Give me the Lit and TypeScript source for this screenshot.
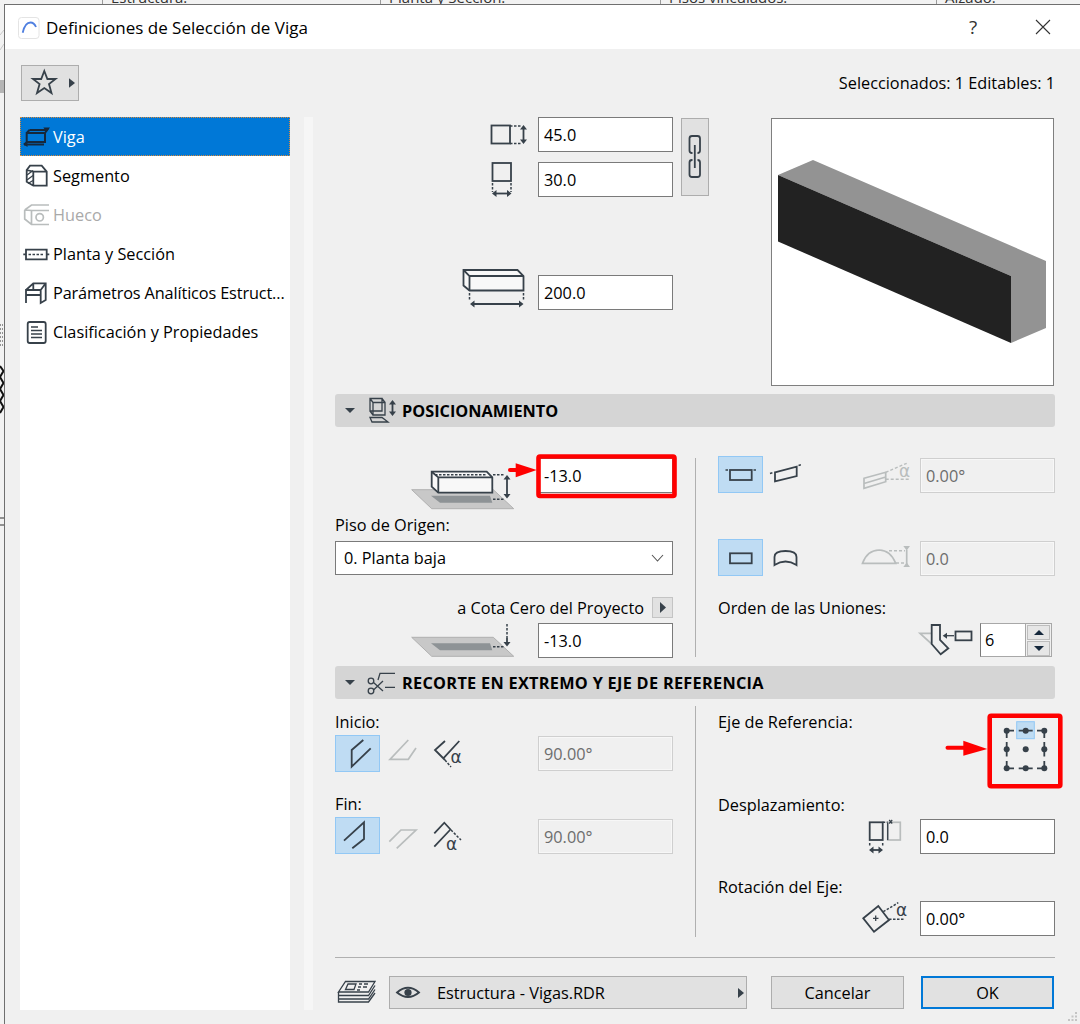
import { LitElement, html, css, svg } from 'lit';
import { customElement } from 'lit/decorators.js';

// svg whose viewBox uses the coordinates of the reference, so shapes can be read off it
const box = (x: number, y: number, w: number, h: number, body: unknown) =>
  html`<svg class="ico" width=${w} height=${h} viewBox="${x} ${y} ${w} ${h}">${body}</svg>`;

const vArrow = (x: number, y1: number, y2: number, cls = 'f') =>
  svg`<path class="s" d="M${x} ${y1 + 3}V${y2 - 3}"/><path class=${cls} d="M${x - 3.5} ${y1 + 4.5}L${x} ${y1}L${x + 3.5} ${y1 + 4.5}zM${x - 3.5} ${y2 - 4.5}L${x} ${y2}L${x + 3.5} ${y2 - 4.5}z"/>`;
const hArrow = (y: number, x1: number, x2: number) =>
  svg`<path class="s" d="M${x1 + 3} ${y}H${x2 - 3}"/><path class="f" d="M${x1 + 4.5} ${y - 3.5}L${x1} ${y}L${x1 + 4.5} ${y + 3.5}zM${x2 - 4.5} ${y - 3.5}L${x2} ${y}L${x2 - 4.5} ${y + 3.5}z"/>`;
const alpha = (x: number, y: number, cls = 'a') => svg`<text class=${cls} x=${x} y=${y}>α</text>`;

const plate = (y: number) => svg`
  <path class="pl" d="M411.7 ${y}H493.3L513.7 ${y + 19}H431.7z"/>
  <path class="sh" d="M431 ${y + 6}H490L492.3 ${y + 13}H440z"/>
  <path class="dash" d="M493 ${y + 9.5}H505"/>`;

const navIcons = {
  viga: svg`<path class="nv" d="M26.7 133H45V142H26.7zM29.500 130H47L45 133M29.500 130L26.7 133"/><path class="nv" d="M24 144.500H44"/><path class="nvf" d="M43.3 127.500H50L46.7 132zM23 144L27.500 140.500V147z"/>`,
  seg: svg`<path class="s" d="M26.7 170L30 165.700H41.700L46.700 171.700V185.700H33.300L26.700 181.700zM26.700 170L33.300 171.700V185.700M33.300 171.700H46.700"/><path class="s t" d="M27 175L33 170.500M27 180L33 175.500M28 183.500L33 180.500"/>`,
  hueco: svg`<path class="g" d="M24.700 210L31.500 205H49M24.700 210V219L31.500 224.500H49M24.700 210L31.500 210.500V224.500M31.500 210.500H49"/><circle class="g" cx="39.700" cy="217.300" r="3.700"/>`,
  planta: svg`<path class="s" d="M26 249.700H46.700V259.300H26zM23.300 254.400H26M46.700 254.400H49.300"/><path class="dash" d="M28.500 254.400H44.500"/>`,
  param: svg`<path class="s" d="M26 290L33.300 283.300H45.700V300L40.700 303V290H26V303M40.700 290L45.700 283.300M26 295H40.700M33.300 283.300V290"/>`,
  clasif: svg`<rect class="s" x="27.700" y="322" width="18" height="21" rx="2"/><path class="s t" d="M31 327H38M31 330.500H42M31 334H42M31 337.500H42"/>`,
};

@customElement('app-root')
export class AppRoot extends LitElement {
  static styles = css`
    :host {
      display: block;
      position: relative;
      width: 1080px;
      height: 1024px;
      overflow: hidden;
      background: #f2f2f2;
      font-family: "Open Sans", "Noto Sans", sans-serif;
      font-size: 16.3px;
      color: #000;
    }
    * { box-sizing: border-box; }
    svg.ico { display: block; flex: none; overflow: visible; }
    .s { fill: none; stroke: #37414a; stroke-width: 1.8; }
    .s.t { stroke-width: 1.3; }
    .f { fill: #37414a; }
    .g { fill: none; stroke: #b9bdbd; stroke-width: 1.7; }
    .gf { fill: #b9bdbd; }
    .dash { fill: none; stroke: #37414a; stroke-width: 1.5; stroke-dasharray: 2.5 1.5; }
    .gdash { fill: none; stroke: #b9bdbd; stroke-width: 1.4; stroke-dasharray: 3 2; }
    .face { fill: #f8f8f8; stroke: #37414a; stroke-width: 1.8; }
    .pl { fill: #c8c8c8; stroke: #b0b0b0; stroke-width: 1; }
    .sh { fill: #8e9396; }
    .nv { fill: none; stroke: #16283c; stroke-width: 2; }
    .nvf { fill: #16283c; }
    text.a { font-size: 17px; fill: #37414a; font-family: "DejaVu Sans", sans-serif; }
    text.ag { font-size: 17px; fill: #b9bdbd; font-family: "DejaVu Sans", sans-serif; }

    .strip {
      display: grid;
      grid-template-columns: 102px 278px 280px 276px 1fr;
      height: 4px;
      overflow: hidden;
      font-size: 15px;
      line-height: 14px;
      color: #333;
    }
    .strip span { padding-left: 8px; margin-top: -10px; border-left: 1px solid #9a9a9a; height: 20px; }
    .strip span:first-child { border: 0; }
    .desk { display: flex; }
    .dialog {
      width: 1076px;
      height: 1020px;
      border: solid #6f6f6f;
      border-width: 1px 0 0 1px;
      background: #f0f0f0;
    }

    .title {
      display: flex;
      align-items: center;
      height: 44px;
      background: #fff;
      padding-left: 12px;
      font-size: 17px;
    }
    .title .name { margin-left: 6px; }
    .title .help { margin-left: auto; width: 20px; text-align: center; color: #333; font-size: 19px; margin-right: 52px; }
    .title .close { margin-right: 29px; }

    .body { padding: 16px 25px 0 15px; }
    .tools {
      display: flex;
      justify-content: space-between;
      align-items: center;
      height: 36px;
      margin-bottom: 16px;
      padding-left: 1px;
    }
    .fav {
      display: flex;
      align-items: center;
      width: 58px;
      height: 36px;
      background: #e1e1e1;
      border: 1px solid #adadad;
    }
    .columns { display: flex; }

    .nav { width: 270px; height: 893px; background: #fff; flex: none; }
    .nav-item {
      display: flex;
      align-items: center;
      height: 39px;
      padding-left: 3px;
      white-space: nowrap;
    }
    .nav-item span { margin-left: 3px; }
    .nav-item.on { background: #0078d7; color: #fff; outline: 1px dotted #d98a3a; outline-offset: -1px; }
    .nav-item.off { color: #a9a9a9; }
    .nav-item .tight { letter-spacing: -0.13px; }
    .track { width: 9px; height: 893px; margin: 0 22px 0 14px; background: #f6f6f6; flex: none; }
    .main { width: 720px; flex: none; }

    .top { display: flex; height: 277px; }
    .sizes { display: flex; flex-direction: column; gap: 10px; width: 338px; }
    .sizes .far { margin-top: 68px; }
    .field { display: flex; justify-content: flex-end; height: 35px; }
    .input {
      display: flex;
      align-items: center;
      width: 135px;
      height: 35px;
      padding-left: 5px;
      background: #fff;
      border: 1px solid #7a7a7a;
      flex: none;
    }
    .input.dis { background: #f0f0f0; border: 1px solid #cfcfcf; color: #6d6d6d; box-shadow: inset 0 0 0 1px #f7f7f7; }
    .link {
      display: flex;
      width: 28px;
      height: 78px;
      margin: 1px 62px 0 8px;
      background: #e1e1e1;
      border: 1px solid #adadad;
    }
    .preview {
      width: 283px;
      height: 268px;
      margin-top: 1px;
      background: #fff;
      border: 1px solid #7f7f7f;
    }

    .head {
      display: flex;
      align-items: center;
      height: 33px;
      background: #d5d5d5;
      border-radius: 3px;
      font-weight: 700;
      white-space: nowrap;
    }
    .head span { margin-left: 2px; }
    .head .wide { letter-spacing: 0.29px; }

    .pos { display: flex; height: 239px; }
    .trim { display: flex; height: 258px; }
    .left { width: 338px; flex: none; }
    .right { width: 337px; flex: none; }
    .rule { width: 1px; margin: 0 22px; background: #b0b0b0; flex: none; }
    .pos .rule { height: 199px; margin-top: 31px; }
    .trim .rule { height: 231px; margin-top: 7px; }
    .pos .left { padding-top: 31px; }
    .pos .right { padding-top: 29px; }
    .trim .left, .trim .right { padding-top: 12px; }

    .label { height: 22px; line-height: 22px; white-space: nowrap; }
    .pos .left .label { margin-top: 21px; }
    .select {
      display: flex;
      align-items: center;
      justify-content: space-between;
      height: 34px;
      margin-top: 5px;
      padding: 0 8px;
      background: #fff;
      border: 1px solid #7a7a7a;
    }
    .cota {
      display: flex;
      justify-content: flex-end;
      align-items: center;
      gap: 8px;
      height: 21px;
      margin-top: 22px;
      white-space: nowrap;
    }
    .mini {
      display: flex;
      width: 21px;
      height: 21px;
      background: #e1e1e1;
      border: 1px solid #c4c4c4;
      flex: none;
    }
    .cota + .field { margin-top: 5px; }

    .toggles { display: flex; height: 37px; }
    .toggles .input { margin-top: 2px; }
    .toggles.second { margin-top: 46px; }
    .toggle {
      width: 45px;
      height: 37px;
      background: #bfdcf3;
      border: 1px solid #92c8f5;
      flex: none;
    }
    .right > .label.order { margin-top: 21px; }
    .spin-row { display: flex; justify-content: flex-end; margin: 4px 3px 0 0; }
    .spin { display: flex; width: 72px; height: 34px; border: 1px solid #a8a8a8; border-left-color: #7a7a7a; }
    .spin .val { display: flex; align-items: center; width: 45px; padding-left: 4px; background: #fff; border-right: 1px solid #a8a8a8; }
    .spin .btns { display: flex; flex-direction: column; justify-content: center; gap: 1px; flex: 1; padding: 0 1px; }
    .spin .btns div { display: flex; height: 15px; background: #e6e6e6; border: 1px solid #bdbdbd; }
    .spin svg { margin: auto; }

    .trim .left .label, .trim .right .label { margin-bottom: 2px; }
    .trim .left .toggles .input { margin-top: 1px; }
    .trim .left .fin { margin-top: 21px; }
    .trim .left .toggles.end .input { margin-top: 2px; }
    .eje { display: flex; justify-content: space-between; height: 83px; }
    .trim .right .field { margin-top: 3px; }
    .trim .right .rot { margin-top: 22px; }

    .sep { height: 1px; background: #b0b0b0; }
    .foot { display: flex; align-items: stretch; height: 33px; margin-top: 18px; }
    .combo {
      display: flex;
      align-items: center;
      width: 358px;
      background: #e1e1e1;
      border: 1px solid #adadad;
      white-space: nowrap;
    }
    .combo span { margin-left: 15px; flex: 1; }
    .btn {
      display: flex;
      align-items: center;
      justify-content: center;
      width: 133px;
      margin-left: 24px;
      background: #e1e1e1;
      border: 1px solid #adadad;
    }
    .btn.ok { margin-left: 17px; border: 2px solid #0078d7; }

    .marks { position: absolute; left: 0; top: 0; pointer-events: none; }
    .grip { position: absolute; right: 2px; bottom: 2px; }
  `;

  render() {
    return html`
      <div class="strip">
        <span></span><span>Estructura:</span><span>Planta y Sección:</span><span>Pisos vinculados:</span><span>Alzado:</span>
      </div>
      <div class="desk">
        ${box(0, 4, 4, 1020, svg`
          <path d="M0 35L4 30M0 50L4 44" stroke="#c9c9c9" fill="none"/>
          <rect x="0" y="80" width="4" height="13" fill="#b5b5b5"/>
          <path d="M0 325H4M0 329H4M0 333H4M0 337H4M0 341H4M0 345H4" stroke="#333" stroke-dasharray="1 1"/>
          <path d="M0 366L3.500 371L0 377L3.500 383L0 389L3.500 395L0 401L3.500 407L0 413" stroke="#111" stroke-width="2" fill="none"/>
          <path d="M0 518H4M0 525H4" stroke="#333"/>
        `)}
        <div class="dialog">
          <div class="title">
            ${box(16, 14, 23, 23, svg`
              <rect x="17.500" y="15.500" width="20.500" height="21" rx="3" fill="#fff" stroke="#e4e4e4"/>
              <path d="M21.700 30.700Q24 20.500 29.500 20.500Q33 20.500 35 25" fill="none" stroke="#4f7fe0" stroke-width="1.800"/>
            `)}
            <div class="name">Definiciones de Selección de Viga</div>
            <div class="help">?</div>
            <div class="close">
              ${box(1035, 20, 16, 16, svg`<path d="M1036 21L1050 35M1050 21L1036 35" fill="none" stroke="#333" stroke-width="1.100"/>`)}
            </div>
          </div>

          <div class="body">
            <div class="tools">
              <div class="fav">
                ${box(22, 66, 56, 34, svg`
                  <path class="s" d="M44.300 71L47.400 79H55.500L49 84L51.500 93L44.300 88L37 93L39.600 84L33 79H41.200z"/>
                  <path class="f" d="M69 78.300L75 83L69 87.700z"/>
                `)}
              </div>
              <div>Seleccionados: 1 Editables: 1</div>
            </div>

            <div class="columns">
              <div class="nav">
                <div class="nav-item on">${box(23, 117, 27, 39, navIcons.viga)}<span>Viga</span></div>
                <div class="nav-item">${box(23, 156, 27, 39, navIcons.seg)}<span>Segmento</span></div>
                <div class="nav-item off">${box(23, 195, 27, 39, navIcons.hueco)}<span>Hueco</span></div>
                <div class="nav-item">${box(23, 234, 27, 39, navIcons.planta)}<span>Planta y Sección</span></div>
                <div class="nav-item">${box(23, 273, 27, 39, navIcons.param)}<span class="tight">Parámetros Analíticos Estruct...</span></div>
                <div class="nav-item">${box(23, 312, 27, 39, navIcons.clasif)}<span>Clasificación y Propiedades</span></div>
              </div>
              <div class="track"></div>

              <div class="main">
                <div class="top">
                  <div class="sizes">
                    <div class="field">
                      ${box(488, 117, 50, 35, svg`
                        <rect class="s" x="491.500" y="125.500" width="18.500" height="18"/>
                        <path class="dash" d="M510 126H522M510 143.500H522"/>
                        ${vArrow(523.500, 125, 144)}
                      `)}
                      <div class="input">45.0</div>
                    </div>
                    <div class="field">
                      ${box(488, 162, 50, 35, svg`
                        <rect class="s" x="492.500" y="163" width="18.500" height="18"/>
                        <path class="dash" d="M492.500 183V192M511 183V192"/>
                        ${hArrow(193.500, 492, 511.500)}
                      `)}
                      <div class="input">30.0</div>
                    </div>
                    <div class="field far">
                      ${box(460, 275, 78, 35, svg`
                        <path class="face" d="M463.500 270H517.500L523.500 276V290.500H469.500L463.500 285.500z"/>
                        <path class="s" d="M463.500 270L469.500 276V290.500M469.500 276H523.500"/>
                        <path class="dash" d="M469.500 293V301M523.500 293V301"/>
                        ${hArrow(304, 470, 523.500)}
                      `)}
                      <div class="input">200.0</div>
                    </div>
                  </div>
                  <div class="link">
                    ${box(682, 119, 26, 76, svg`
                      <rect class="s" x="689.500" y="136" width="10.500" height="17" rx="2.500"/>
                      <rect class="s" x="689.500" y="160" width="10.500" height="17" rx="2.500"/>
                      <path d="M692.500 153H697.500M692.500 160H697.500" stroke="#e1e1e1" stroke-width="3"/>
                      <path class="s" d="M694.800 145V168"/>
                    `)}
                  </div>
                  <div class="preview">
                    ${box(772, 119, 281, 266, svg`
                      <path fill="#939393" d="M778 175L813 160L1046 261V328L1011 343L1011 276z"/>
                      <path fill="#222" d="M778 175L1011 276V343L778 241.500z"/>
                    `)}
                  </div>
                </div>

                <div class="head">
                  ${box(335, 394, 65, 33, svg`
                    <path class="f" d="M345 408H355L350 413z"/>
                    <path class="s t" d="M370 398.500H382V411H370zM373 402.500H385V415H373zM370 398.500L373 402.500M382 398.500L385 402.500M370 411L373 415"/>
                    <path class="s t" d="M370 417.500H382L388 422H372z"/>
                    ${vArrow(392.500, 400, 416)}
                  `)}
                  <span>POSICIONAMIENTO</span>
                </div>

                <div class="pos">
                  <div class="left">
                    <div class="field">
                      ${box(408, 458, 130, 35, svg`
                        ${plate(489.700)}
                        <path class="face" d="M431.700 471.700H486.700L492.300 477.300V492.700H438.300L431.700 486.700z"/>
                        <path class="s" d="M431.700 471.700L438.300 477.300V492.700M438.300 477.300H492.300"/>
                        <path class="dash" d="M435 474.700H487M493 474.700H505"/>
                        ${vArrow(507, 475, 498.500)}
                      `)}
                      <div class="input">-13.0</div>
                    </div>
                    <div class="label">Piso de Origen:</div>
                    <div class="select">
                      <span>0. Planta baja</span>
                      ${box(653, 553, 13, 9, svg`<path d="M654 554L659.500 560L665 554" fill="none" stroke="#555" stroke-width="1.100"/>`)}
                    </div>
                    <div class="cota">
                      <span>a Cota Cero del Proyecto</span>
                      <div class="mini">${box(652, 598, 19, 19, svg`<path class="f" d="M659 602L665 607.500L659 613z"/>`)}</div>
                    </div>
                    <div class="field">
                      ${box(408, 623, 130, 35, svg`
                        ${plate(637.300)}
                        <path class="dash" d="M507 624V638"/>
                        <path class="s" d="M507 638V645"/>
                        <path class="f" d="M503.500 642H510.500L507 646.500z"/>
                      `)}
                      <div class="input">-13.0</div>
                    </div>
                  </div>
                  <div class="rule"></div>
                  <div class="right">
                    <div class="toggles">
                      <div class="toggle">
                        ${box(719, 457, 43, 35, svg`
                          <rect class="s" x="730" y="470" width="21.700" height="10"/>
                          <path class="dash" d="M725.500 470H728.500M753.500 470H756.500"/>
                        `)}
                      </div>
                      ${box(763, 456, 157, 37, svg`
                        <path class="s" d="M775 472.300L796.700 466.700V476L775 481.300z"/>
                        <path class="dash" d="M770 473.500L772.700 472.700M798.500 465.500L801 464.700"/>
                        <path class="g" d="M864 478.300L885.700 472.300V481.700L864 488.300zM864 483.500L885.700 477"/>
                        <path class="gdash" d="M885.700 472.300L906.700 463.300M885.700 479.300H909.300"/>
                        ${alpha(899, 477, 'ag')}
                      `)}
                      <div class="input dis">0.00°</div>
                    </div>
                    <div class="toggles second">
                      <div class="toggle">
                        ${box(719, 540, 43, 35, svg`<rect class="s" x="730" y="553.300" width="21.700" height="10"/>`)}
                      </div>
                      ${box(763, 539, 157, 37, svg`
                        <path class="s" d="M774.500 565V557Q774.500 551 785.500 551Q796.500 551 796.500 557V565Q785.500 558 774.500 565z"/>
                        <path class="g" d="M862.500 563.300H895.700Q890.500 550.300 879.200 550Q867.200 550.300 862.500 563.300zM906.700 550V564"/>
                        <path class="gdash" d="M889 550.700H905M896 563H905"/>
                        <path class="gf" d="M903.300 546H910L906.700 550.500zM903.300 567H910L906.700 562.500z"/>
                      `)}
                      <div class="input dis">0.0</div>
                    </div>
                    <div class="label order">Orden de las Uniones:</div>
                    <div class="spin-row">
                      ${box(915, 623, 65, 34, svg`
                        <path class="g" d="M931.700 633.300H920L931.700 644"/>
                        <path class="s" d="M931.700 625H940V640L948.300 648.300L940.700 654.300L931.700 644z"/>
                        <path class="s t" d="M945 635.700H954"/>
                        <path class="f" d="M947 632.700L942.700 635.700L947 638.700z"/>
                        <rect class="s" x="955.500" y="631.500" width="16" height="8.800" stroke-width="2"/>
                      `)}
                      <div class="spin">
                        <div class="val">6</div>
                        <div class="btns">
                          <div>${box(0, 0, 10, 5, svg`<path class="nvf" d="M0 5L5 0L10 5z"/>`)}</div>
                          <div>${box(0, 0, 10, 5, svg`<path class="nvf" d="M0 0L5 5L10 0z"/>`)}</div>
                        </div>
                      </div>
                    </div>
                  </div>
                </div>

                <div class="head">
                  ${box(335, 666, 65, 33, svg`
                    <path class="f" d="M345 680H355L350 685z"/>
                    <circle class="s t" cx="371" cy="681" r="2.800"/>
                    <circle class="s t" cx="371" cy="691" r="2.800"/>
                    <path class="s t" d="M373.500 682.500L383 691M373.500 690L383 681M378 680L380 673.300H395M385 687.300H395"/>
                  `)}
                  <span class="wide">RECORTE EN EXTREMO Y EJE DE REFERENCIA</span>
                </div>

                <div class="trim">
                  <div class="left">
                    <div class="label">Inicio:</div>
                    <div class="toggles">
                      <div class="toggle">
                        ${box(336, 736, 43, 35, svg`<path class="s" d="M363.300 740L351.700 750V766.700L370.700 748.300"/>`)}
                      </div>
                      ${box(380, 735, 158, 37, svg`
                        <path class="g" d="M408.300 740L390 759.300H408.300L416 748"/>
                        <path class="s" d="M445 741L435 750L445 760M459.300 741L443.300 758.300"/>
                        <path class="dash" d="M445 760L451 767"/>
                        ${alpha(450.500, 763)}
                      `)}
                      <div class="input dis">90.00°</div>
                    </div>
                    <div class="label fin">Fin:</div>
                    <div class="toggles end">
                      <div class="toggle">
                        ${box(336, 818, 43, 35, svg`<path class="s" d="M344 840.700L364 822.300V839L352.300 848.300"/>`)}
                      </div>
                      ${box(380, 817, 158, 37, svg`
                        <path class="g" d="M389.300 841.700L401 830H416L396.700 848.300"/>
                        <path class="s" d="M434.300 833.300L444.300 822.700L451 830M434.300 846.700L450 830"/>
                        <path class="dash" d="M451 830L461 840"/>
                        ${alpha(446, 849.500)}
                      `)}
                      <div class="input dis">90.00°</div>
                    </div>
                  </div>
                  <div class="rule"></div>
                  <div class="right">
                    <div class="eje">
                      <div class="label">Eje de Referencia:</div>
                      ${box(1000, 711, 55, 70, svg`
                        <rect x="1016.700" y="721.700" width="17.600" height="17" fill="#bfdcf3" stroke="#92c8f5"/>
                        <path class="s" d="M1006.700 730.700H1014M1006.700 730.700V738M1018.700 730.700H1032.700M1044.300 730.700H1037M1044.300 730.700V738
                          M1006.700 742V756.600M1044.300 742V756.600
                          M1006.700 768.300V761M1006.700 768.300H1014M1018.700 768.300H1032.700M1044.300 768.300H1037M1044.300 768.300V761"/>
                        ${[730.7, 749.3, 768.3].map((y) =>
                          [1006.7, 1025.7, 1044.3].map((x) => svg`<circle class="f" cx=${x} cy=${y} r="3"/>`))}
                      `)}
                    </div>
                    <div class="label">Desplazamiento:</div>
                    <div class="field">
                      ${box(860, 819, 60, 35, svg`
                        <rect class="g" x="887.700" y="822.300" width="12.600" height="17.700"/>
                        <rect class="s" x="869.700" y="822.300" width="13" height="17.700"/>
                        <path class="dash" d="M882.700 822.300H887.700"/>
                        <path class="s t" d="M887.700 823V840M889.200 820L892.200 823.500M892.200 820L889.200 823.500"/>
                        <path class="dash" d="M869.700 843V846M882.700 843V846"/>
                        ${hArrow(850, 869, 883)}
                      `)}
                      <div class="input">0.0</div>
                    </div>
                    <div class="label rot">Rotación del Eje:</div>
                    <div class="field">
                      ${box(860, 901, 60, 35, svg`
                        <path class="s" d="M863.300 918.300L878.300 906L889 920L874 931.700z"/>
                        <path class="s t" d="M873 918.300H878.500M875.700 915.500V921"/>
                        <path class="dash" d="M883.300 911.700L898.300 902.700M889 919.300H905"/>
                        ${alpha(896, 915.500)}
                      `)}
                      <div class="input">0.00°</div>
                    </div>
                  </div>
                </div>

                <div class="sep"></div>
                <div class="foot">
                  ${box(335, 976, 54, 33, svg`
                    <path class="s t" d="M345.500 981.500H375L368.500 992H338.500z"/>
                    <path class="s t" d="M338.500 992V995.500H368.500L375 985.500M338.500 995.500V999H368.500L375 989.500M338.500 999V1002H368.500L375 993"/>
                    <path class="s t" d="M348 984H356L354 989.500H345.500zM359 984H362M358 987H361M357 990H360M364 984H368M363 987H367"/>
                  `)}
                  <div class="combo">
                    ${box(390, 977, 32, 31, svg`
                      <path class="s" d="M397 992.500Q408 983 419 992.500Q408 1001.500 397 992.500z"/>
                      <circle class="f" cx="408" cy="992.500" r="3.600"/>
                    `)}
                    <span>Estructura - Vigas.RDR</span>
                    ${box(735, 985, 10, 14, svg`<path class="f" d="M737 987L743 992L737 997z"/>`)}
                  </div>
                  <div class="btn">Cancelar</div>
                  <div class="btn ok">OK</div>
                </div>
              </div>
            </div>
          </div>
        </div>
      </div>

      <svg class="marks" width="1080" height="1024" viewBox="0 0 1080 1024">
        <rect x="538.500" y="456.500" width="136" height="39.500" rx="1.500" fill="none" stroke="#f00" stroke-width="4.600"/>
        <rect x="989.700" y="715.700" width="70.600" height="70.600" rx="1.500" fill="none" stroke="#f00" stroke-width="4.600"/>
        <path d="M510 470H517" stroke="#f00" stroke-width="4" stroke-linecap="round"/>
        <path d="M515.700 463.300L536.700 470L515.700 477.300z" fill="#f00"/>
        <path d="M947.500 747.700H964" stroke="#f00" stroke-width="4" stroke-linecap="round"/>
        <path d="M963.300 740.700L987.300 749L963.300 755.700z" fill="#f00"/>
      </svg>
      <svg class="grip" width="10" height="10" viewBox="0 0 10 10" fill="#c4c4c4">
        <rect x="7" y="0" width="2" height="2"/><rect x="3.500" y="3.500" width="2" height="2"/><rect x="7" y="3.500" width="2" height="2"/>
        <rect x="0" y="7" width="2" height="2"/><rect x="3.500" y="7" width="2" height="2"/><rect x="7" y="7" width="2" height="2"/>
      </svg>
    `;
  }
}
